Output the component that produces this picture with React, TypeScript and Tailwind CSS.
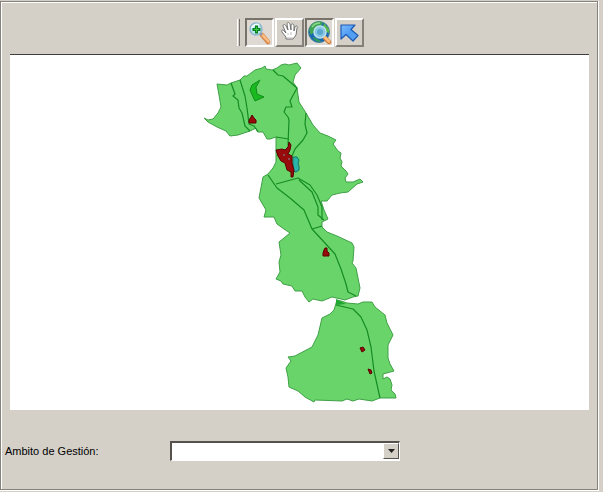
import React from "react";

type ToolProps = { label: string; pressed?: boolean; children: React.ReactNode };

function ToolButton({ label, pressed = false, children }: ToolProps) {
  return (
    <button
      type="button"
      aria-label={label}
      aria-pressed={pressed}
      className={
        "flex h-[29px] w-[29px] items-center justify-center border-2 " +
        (pressed
          ? "border-t-[#77736b] border-l-[#77736b] border-r-white border-b-white bg-[#dedad3]"
          : "border-t-white border-l-white border-r-[#85817a] border-b-[#85817a] bg-[#d4d0c8]")
      }
    >
      {children}
    </button>
  );
}

function ZoomInIcon() {
  return (
    <svg width="24" height="24" viewBox="0 0 24 24" aria-hidden="true">
      <path d="M14 14 20 21" stroke="#d58a4c" strokeWidth="4.5" strokeLinecap="round" />
      <path d="M14.500 14 20.500 20.500" stroke="#ffbd84" strokeWidth="2.500" strokeLinecap="round" />
      <path d="m11 11 3 3" stroke="#8197ac" strokeWidth="2" />
      <circle cx="8" cy="8" r="6" fill="#b5e6ea" stroke="#8fb5cd" strokeWidth="1.5" />
      <path d="M4 7a5 5 0 0 1 7-3" stroke="#effcff" strokeWidth="2" fill="none" />
      <path d="M7 4.500h3v2.500h2.500v3H10v2.500H7V10H4.500V7H7z" fill="#087d22" />
      <path d="M8.500 6v5M6 8.500h5" stroke="#39c83e" />
    </svg>
  );
}

function HandIcon() {
  return (
    <svg width="22" height="22" viewBox="0 0 22 22" className="-translate-y-px" aria-hidden="true">
      <path
        d="M7 18v-2l-4-5c-1-2 1-3 2-1l2 2-3-7c0-2 2-2 3 0l2 4-1-6c0-2 2-2 3 0l1 6V4c1-2 3-1 3 1v5l1-4c1-2 3-1 2 1l-1 7-3 4z"
        fill="#fff"
        stroke="#686868"
        strokeWidth="0.9"
        strokeLinejoin="round"
      />
      <path d="M8 17h6M9 12v2m3-3v3" stroke="#bbb" />
    </svg>
  );
}

function GlobeIcon() {
  return (
    <svg width="25" height="25" viewBox="0 0 25 25" aria-hidden="true">
      <circle cx="12" cy="12" r="10.5" fill="#1767b4" stroke="#4a8598" />
      <path d="M2.500 9C4 3 10 0 16 2.500L14 6 9 7l-2 5-3 3c-1-2-2-4-1.500-6z" fill="#3fa552" />
      <path d="m17 3 5 6v4l-3-1-3-5z" fill="#58b74a" />
      <path d="m5 17 4 1 5 3-1 1c-3 0-6-2-8-5z" fill="#2f9a62" />
      <path d="M5 7c2-3 5-4 8-4" stroke="#8fd68b" strokeWidth="1.5" fill="none" />
      <path d="m18 18 4 4" stroke="#cf7c38" strokeWidth="4.5" strokeLinecap="round" />
      <path d="m18 17.500 4 4" stroke="#ffbd84" strokeWidth="2.500" strokeLinecap="round" />
      <circle cx="13" cy="12" r="6" fill="#8ac6e2" stroke="#b9e2ee" strokeWidth="1.5" />
      <circle cx="13" cy="12" r="3" fill="#5aa6cf" />
    </svg>
  );
}

function ArrowIcon() {
  return (
    <svg width="23" height="23" viewBox="0 0 23 23" aria-hidden="true">
      <defs>
        <linearGradient id="arrow-fill" x1="0" y1="0" x2="1" y2="1">
          <stop offset="0" stopColor="#7dbaff" />
          <stop offset="0.5" stopColor="#4f9df2" />
          <stop offset="1" stopColor="#5aa4f4" />
        </linearGradient>
      </defs>
      <path
        d="M3 4H17L13 8.500 20 14.500 15 20 8 13.500 3 18z"
        fill="url(#arrow-fill)"
        stroke="#1c5bb5"
        strokeWidth="1.2"
        strokeLinejoin="round"
      />
    </svg>
  );
}

function DistrictMap() {
  return (
    <svg
      viewBox="10 55 579 355"
      className="block h-auto w-full bg-white"
      role="img"
      aria-label="Mapa"
    >
      <g fill="#69d469" stroke="#3fa046" strokeWidth="1" strokeLinejoin="round">
        <path d="M204 118 208 120 213 119 218 113 221 107 219 95 217 84 227 85 231 83 240 80 244 76 247 76 255 70 262 68 265 66 266 69 272 70 277 68 281 65 285 64 289 65 297 63 301 68 295 75 293 82 297 88 299 102 306 113 313 125 320 133 328 136 336 140 333 144 338 151 341 153 340 158 342 162 341 166 346 171 348 174 345 178 346 182 353 182 360 179 363 182 357 184 348 192 340 193 332 195 327 201 321 201 324 210 328 219 322 222 322 227 327 232 337 236 352 243 354 247 353 261 352 263 356 268 357 273 360 288 358 296 353 297 345 300 341 299 332 297 322 301 313 299 309 302 305 297 302 291 295 291 292 286 283 284 281 281 276 279 280 272 279 262 281 255 279 242 284 238 290 233 284 229 277 224 274 217 264 217 266 210 259 198 263 177 268 174 273 168 276 162 276 137 270 139 267 139 263 132 258 132 256 128 250 131 238 135 230 136 226 131 217 127 208 122z" />
        <path d="M337 300 341 301 347 303 358 304 363 302 372 302 375 307 385 315 387 323 393 335 388 345 388 358 390 364 394 371 383 374 383 379 387 377 390 379 392 385 391 390 395 394 396 398 380 398 372 401 359 399 353 401 347 399 342 401 315 400 314 402 305 397 298 391 289 387 288 377 286 368 291 361 288 357 295 356 312 347 318 335 322 318 330 314 334 310z" />
      </g>
      <g fill="none" stroke="#158c24" strokeWidth="1.2" strokeLinejoin="round">
        <path d="M231 83 235 94 233 96 238 100 239 108 242 113 245 126 250 131M240 80 245 96 247 108 249 124 254 126 258 132" />
        <path d="M273 70 278 75 283 76 297 88 290 101 292 107 286 107 284 112 288 117 289 120 288 145" />
        <path d="M276 137 289 139M306 113 305 124 307 133 303 140 295 149 292 156M276 184 298 178 310 185 317 195 322 207 322 220M299 180 312 192 318 207 318 215 324 220" />
        <path d="M268 175 277 188 290 198 304 210 312 229 324 242 335 254 341 269 346 284 348 292 356 296M312 229 322 226M336 305 353 309 361 317 367 330 371 347 374 371 380 398" />
      </g>
      <path d="M336 299 346 304 336 305z" fill="#20a632" />
      <path d="m260 80-8 5-2 5 4 9 1 2 9-4-7-3-1-7z" fill="#18ba20" stroke="#128d18" />
      <path d="m293 157 4 0 2 3-1 4 1 2v4l-3 2-3-1z" fill="#2ab5a8" stroke="#15746d" />
      <g fill="#980b0b" stroke="#5b0000" strokeWidth="1">
        <path d="M276 150 282 149 285 150 288 147 289 142 291 145 290 150 288 154 292 156 292 163 294 170 293 177 291 177 291 172 287 170 285 163 281 161 278 156z" />
        <path d="m251 117 1-2 2 3 2 2v3h-7v-3zM324 250l1-2h2v3l2 2v3h-6v-3zM360 348l3-1 2 3-3 2zM368 369l3 1 1 3-2 1z" />
      </g>
      <circle cx="284" cy="155" r="1" fill="#866070" />
      <circle cx="289" cy="159" r="1" fill="#866070" />
    </svg>
  );
}

export default function App() {
  return (
    <main className="min-h-screen bg-[#d4d0c8] pt-px pr-1 pb-px font-['Liberation_Sans',Arial,sans-serif] text-[11px] text-black">
      <div className="border-r border-b border-white">
        <div className="border border-[#85827b]">
          <div className="border-t border-l border-white pt-[15px] pb-7">
            <div role="toolbar" aria-label="Herramientas del mapa" className="flex items-center justify-center gap-px pl-[2px]">
              <div className="mr-1 h-[27px] w-[3px] border-l border-r border-l-white border-r-[#77736b]" />
              <ToolButton label="Acercar" pressed><ZoomInIcon /></ToolButton>
              <ToolButton label="Desplazar"><HandIcon /></ToolButton>
              <ToolButton label="Vista completa" pressed><GlobeIcon /></ToolButton>
              <ToolButton label="Seleccionar"><ArrowIcon /></ToolButton>
            </div>
            <div className="mx-2 mt-[7px] border-t border-[#403e3b]">
              <DistrictMap />
            </div>
            <div className="mt-[31px] flex items-center pl-[3px]">
              <label htmlFor="ambito" className="w-[165px] shrink-0">Ambito de Gestión:</label>
              <div className="relative w-[230px]">
                <select
                  id="ambito"
                  className="block h-5 w-full appearance-none rounded-none border-t-2 border-r border-b border-l-2 border-t-[#55524e] border-r-white border-b-white border-l-[#55524e] bg-white pr-5 pl-1 outline-none"
                >
                  <option value=""></option>
                </select>
                <span className="pointer-events-none absolute top-[2px] right-px flex h-4 w-4 items-center justify-center border border-t-white border-r-[#55524e] border-b-[#55524e] border-l-white bg-[#d4d0c8]">
                  <svg width="7" height="4" viewBox="0 0 7 4" aria-hidden="true">
                    <path d="M0 0h7L3.5 4z" fill="#222" />
                  </svg>
                </span>
              </div>
            </div>
          </div>
        </div>
      </div>
    </main>
  );
}
